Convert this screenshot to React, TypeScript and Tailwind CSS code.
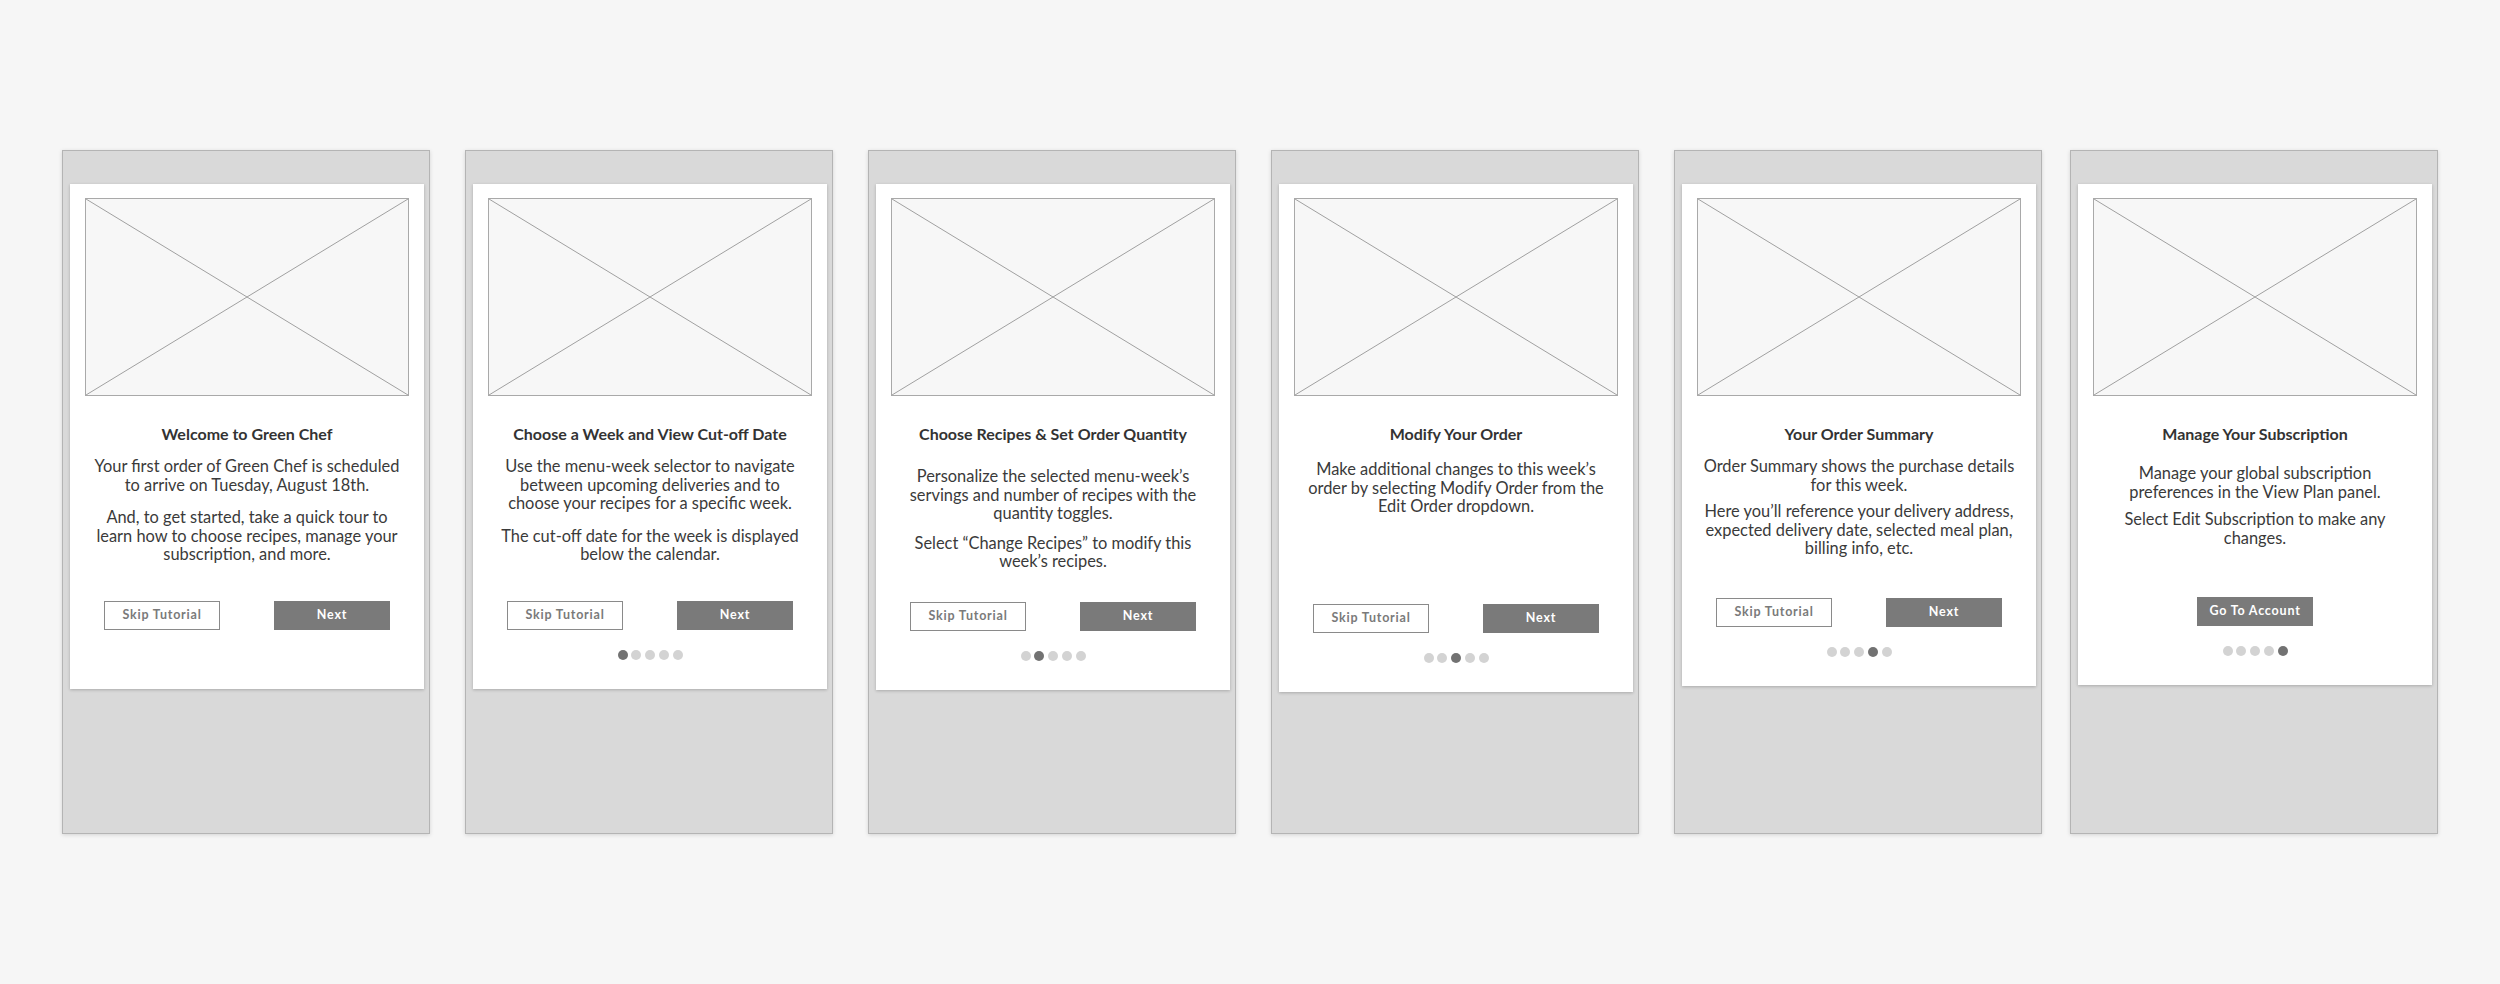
import React from "react";

type Card = {
  title: string;
  paras: string[][];
  textCls: string;
  gapCls: string;
  panelCls: string;
  active: number; // -1 = no dots
  final?: boolean;
};

const cards: Card[] = [
  {
    title: "Welcome to Green Chef",
    paras: [
      ["Your first order of Green Chef is scheduled", "to arrive on Tuesday, August 18th."],
      ["And, to get started, take a quick tour to", "learn how to choose recipes, manage your", "subscription, and more."],
    ],
    textCls: "pt-[13px] h-[157px]",
    gapCls: "gap-[14px]",
    panelCls: "",
    active: -1,
  },
  {
    title: "Choose a Week and View Cut-off Date",
    paras: [
      ["Use the menu-week selector to navigate", "between upcoming deliveries and to", "choose your recipes for a specific week."],
      ["The cut-off date for the week is displayed", "below the calendar."],
    ],
    textCls: "pt-[13px] h-[157px]",
    gapCls: "gap-[14px]",
    panelCls: "",
    active: 0,
  },
  {
    title: "Choose Recipes & Set Order Quantity",
    paras: [
      ["Personalize the selected menu-week\u2019s", "servings and number of recipes with the", "quantity toggles."],
      ["Select \u201cChange Recipes\u201d to modify this", "week\u2019s recipes."],
    ],
    textCls: "pt-[23px] h-[158px]",
    gapCls: "gap-[11px]",
    panelCls: "",
    active: 1,
  },
  {
    title: "Modify Your Order",
    paras: [["Make additional changes to this week\u2019s", "order by selecting Modify Order from the", "Edit Order dropdown."]],
    textCls: "pt-[16px] h-[160px]",
    gapCls: "gap-[14px]",
    panelCls: "",
    active: 2,
  },
  {
    title: "Your Order Summary",
    paras: [
      ["Order Summary shows the purchase details", "for this week."],
      ["Here you\u2019ll reference your delivery address,", "expected delivery date, selected meal plan,", "billing info, etc."],
    ],
    textCls: "pt-[13px] h-[154px]",
    gapCls: "gap-[8px]",
    panelCls: "",
    active: 3,
  },
  {
    title: "Manage Your Subscription",
    paras: [
      ["Manage your global subscription", "preferences in the View Plan panel."],
      ["Select Edit Subscription to make any", "changes."],
    ],
    textCls: "pt-[20px] h-[153px]",
    gapCls: "gap-[9px]",
    panelCls: "ml-[-7px]",
    active: 4,
    final: true,
  },
];

function Placeholder() {
  return (
    <div className="h-[198px] w-full border border-[#a9a9a9] bg-[#f7f7f7]">
      <svg className="block h-full w-full" viewBox="0 0 321 196" preserveAspectRatio="none">
        <line x1="0" y1="0" x2="321" y2="196" stroke="#a0a0a0" strokeWidth="1" vectorEffect="non-scaling-stroke" />
        <line x1="321" y1="0" x2="0" y2="196" stroke="#a0a0a0" strokeWidth="1" vectorEffect="non-scaling-stroke" />
      </svg>
    </div>
  );
}

function Dots({ active }: { active: number }) {
  return (
    <div className="mt-[19.5px] flex h-[10px] items-center justify-center gap-[3.75px]">
      {active >= 0 &&
        [0, 1, 2, 3, 4].map((i) => (
          <span
            key={i}
            className={
              "block h-[10px] w-[10px] rounded-full " + (i === active ? "bg-[#727272]" : "bg-[#d3d3d3]")
            }
          />
        ))}
    </div>
  );
}

const btnText = "text-[12.5px] font-bold tracking-[0.8px]";

function TourCard({ c }: { c: Card }) {
  return (
    <div
      className={
        "flex h-[684px] w-[368px] shrink-0 flex-col border border-[#b4b4b4] bg-[#d9d9d9] pt-[32.5px] pl-[7px] shadow-[0_1px_4px_rgba(0,0,0,0.14)] " +
        c.panelCls
      }
    >
      <div className="flex w-[354px] flex-col bg-white px-[15px] pt-[14.5px] pb-[29.5px] shadow-[0_1px_3px_rgba(0,0,0,0.22)]">
        <Placeholder />
        <div className="mt-[28px] h-[20px] text-center text-[16px] leading-[20px] font-bold whitespace-nowrap text-[#333333]">
          {c.title}
        </div>
        <div className={"flex flex-col text-center text-[16.4px] leading-[18.6px] text-[#3a3a3a] " + c.textCls + " " + c.gapCls}>
          {c.paras.map((p, i) => (
            <p key={i} className="whitespace-nowrap">
              {p.map((l, j) => (
                <React.Fragment key={j}>
                  {l}
                  {j < p.length - 1 && <br />}
                </React.Fragment>
              ))}
            </p>
          ))}
        </div>
        {c.final ? (
          <div className="flex justify-center">
            <div className={"flex h-[29px] w-[116px] items-center justify-center bg-[#7a7a7a] text-white " + btnText}>
              Go To Account
            </div>
          </div>
        ) : (
          <div className="flex justify-between px-[19px]">
            <div className={"flex h-[29px] w-[116px] items-center justify-center border border-[#8a8a8a] bg-white text-[#7a7a7a] " + btnText}>
              Skip Tutorial
            </div>
            <div className={"flex h-[29px] w-[116px] items-center justify-center bg-[#7a7a7a] text-white " + btnText}>
              Next
            </div>
          </div>
        )}
        <Dots active={c.active} />
      </div>
    </div>
  );
}

export default function App() {
  return (
    <div
      className="flex h-[984px] w-[2500px] gap-[35px] bg-[#f6f6f6] pt-[150px] pl-[62px]"
      style={{ fontFamily: "Lato, 'Open Sans', sans-serif" }}
    >
      {cards.map((c, i) => (
        <TourCard key={i} c={c} />
      ))}
    </div>
  );
}
